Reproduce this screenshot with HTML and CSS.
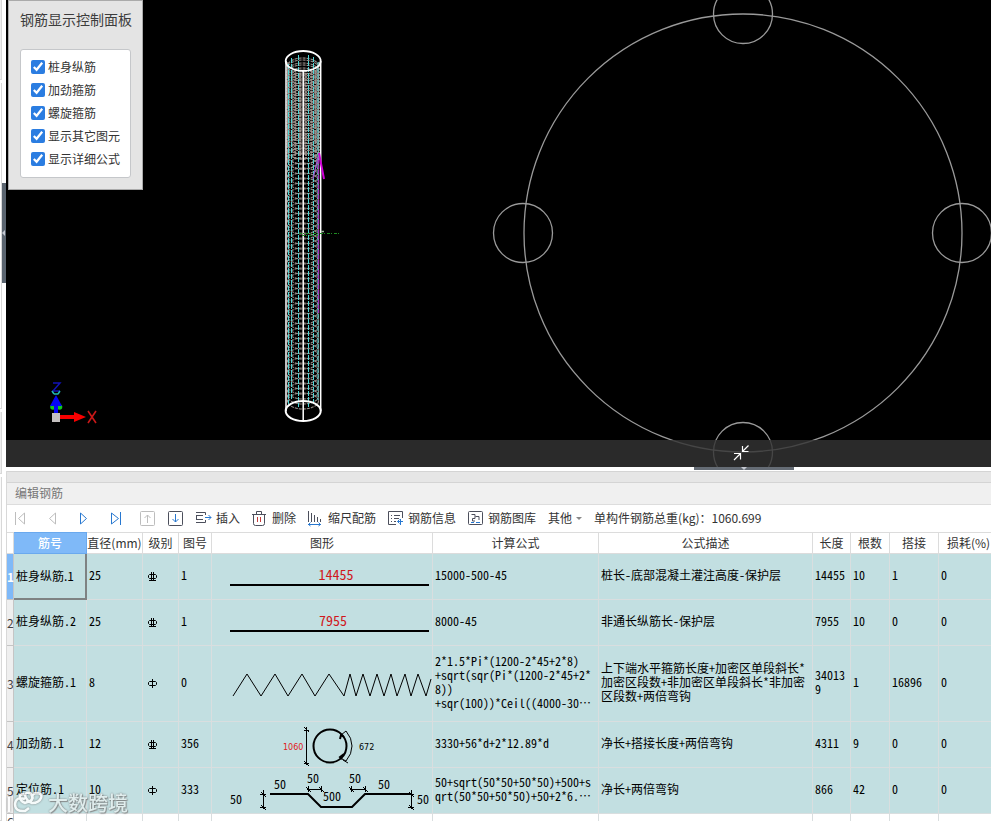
FILE: index.html
```html
<!DOCTYPE html>
<html lang="zh-CN">
<head>
<meta charset="utf-8">
<title>编辑钢筋</title>
<link rel="stylesheet" href="styles.css">
</head>
<body>
<aside class="gutter"><div class="gutter-top"></div><div class="gutter-mid"></div><div class="gutter-low"></div><div class="gutter-end"></div><button class="side-handle" aria-label="展开"></button></aside>
<main class="main">
<section class="stage">
<svg class="scene" viewBox="6 0 985 467" preserveAspectRatio="xMidYMin meet" aria-hidden="true">
<defs>
<g id="ring"><ellipse cx="303" cy="0" rx="15.5" ry="8"/></g>
<g id="rings4"><use href="#ring"/><use href="#ring" y="5"/><use href="#ring" y="10"/><use href="#ring" y="15"/></g>
<g id="rings16"><use href="#rings4"/><use href="#rings4" y="20"/><use href="#rings4" y="40"/><use href="#rings4" y="60"/></g>
</defs>
<g fill="none" stroke="#9a9a9a" stroke-width="1.3">
<circle cx="743" cy="233" r="219"/><circle cx="743" cy="14" r="29.5"/><circle cx="743" cy="452" r="29.5"/><circle cx="523" cy="233" r="29.5"/><circle cx="962" cy="233" r="29.5"/>
</g>
<g fill="none" stroke="#a09590" stroke-width="1.1" stroke-dasharray="3 1">
<use href="#rings16" y="66"/><use href="#rings16" y="146"/><use href="#rings16" y="226"/><use href="#rings16" y="306"/><use href="#rings4" y="386"/>
<use href="#rings16" y="68"/><use href="#rings4" y="146"/>
</g>
<path d="M287.500 62V160M295 70V160M300 70V160M306 70V160M311 70V160M315.500 70V160M319 62V160" stroke="#a3958f" stroke-width="2" stroke-dasharray="2 1" opacity=".8"/>
<path d="M288.500 64V404M291.500 58V400M298.500 55V407M308.500 55V407M313.500 57V402M318 62V400" stroke="#4fd6d6" stroke-width="1" stroke-dasharray="5 1" fill="none"/>
<g fill="none" stroke="#fff" stroke-width="1.5"><ellipse cx="303.200" cy="61" rx="17.500" ry="10" stroke-width="1.800"/><ellipse cx="303.200" cy="411" rx="17.500" ry="10" stroke-width="2"/><path d="M286 61V411M320.700 61V411M303.200 71V421"/></g>
<path d="M318.500 160V313" stroke="#a12fbc" stroke-width="1.400" stroke-dasharray="4 1"/>
<path d="M319 153L324 179" stroke="#d000d8" stroke-width="2"/><path d="M318 157L313 179" stroke="#9a55c8" stroke-width="1.200"/>
<path d="M299 233.500H341M302 235.500H318" stroke="#1f8a22" stroke-dasharray="3 1 1 2"/><path d="M321 231.500h3" stroke="#9db79d" stroke-width="1.500"/>
<g><circle cx="53" cy="407" r="2.800" fill="#11c71e"/><circle cx="59.500" cy="407" r="2.800" fill="#11c71e"/><path d="M56 395L62 406H58V415H54V406H50Z" fill="#0505f5"/><path d="M53 383H60L53 391H60" fill="none" stroke="#1212b4" stroke-width="1.500"/><path d="M52 391L54 394M60 391L58 394M54 394h4" stroke="#22b8b0" stroke-width="1.500"/><rect x="52" y="413" width="8" height="9" fill="#c4c0c0"/><path d="M60 415H74V412L86 417L74 422V419H60Z" fill="#f80000"/><path d="M88 411L96 423M96 411L88 423" stroke="#c91818" stroke-width="1.600"/></g>
</svg>
<div class="stage-bar"><button class="collapse" aria-label="收起"><svg width="16" height="16" viewBox="0 0 16 16" fill="none" stroke="#fff" stroke-width="1.200"><path d="M15.500 .5L9.500 6.500M9.500 1V6.500H15.500M1 15L7 9M1 8.500H7.500V14.500"/></svg></button></div>
<form class="panel">
<h2>钢筋显示控制面板</h2>
<div class="options">
<label><input type="checkbox" checked>桩身纵筋</label>
<label><input type="checkbox" checked>加劲箍筋</label>
<label><input type="checkbox" checked>螺旋箍筋</label>
<label><input type="checkbox" checked>显示其它图元</label>
<label><input type="checkbox" checked>显示详细公式</label>
</div>
</form>
</section>
<button class="drag" aria-label="调整高度"></button>
<section class="editor">
<div class="band"></div>
<h1>编辑钢筋</h1>
<div class="toolbar">
<div class="nav">
<button aria-label="首条" class="off"><svg viewBox="0 0 16 16"><path d="M3.500 2V15M12.500 3V14L6.500 8.500Z"/></svg></button>
<button aria-label="上一条" class="off"><svg viewBox="0 0 16 16"><path d="M11.500 3V14L5.500 8.500Z"/></svg></button>
<button aria-label="下一条" class="blue"><svg viewBox="0 0 16 16"><path d="M4.500 3V14L10.500 8.500Z"/></svg></button>
<button aria-label="末条" class="blue"><svg viewBox="0 0 16 16"><path d="M3.500 3V14L10.500 8.500ZM12.500 2V15"/></svg></button>
<button aria-label="上移" class="off"><svg viewBox="0 0 16 16"><rect x=".5" y="1.500" width="14" height="14" rx="1"/><path d="M7.500 13V5M4.500 8L7.500 5L10.500 8"/></svg></button>
</div>
<button aria-label="下移"><svg viewBox="0 0 16 16"><rect x=".5" y="1.500" width="14" height="14" rx="1"/><path class="accent" d="M7.500 4V12M4.500 9L7.500 12L10.500 9"/></svg></button>
<button><svg viewBox="0 0 16 16"><path d="M0 2.500H9.500V5M0 5.500H7M0 9.500H7M0 12.500H9.500V10M.5 5.500V9.500"/><path class="accent" d="M9 7.500H15M12.500 5L15 7.500L12.500 10"/></svg>插入</button>
<button><svg viewBox="0 0 16 16"><path d="M0 4.500H14M4.500 4V1.500H9.500V4M1.500 5V13.500Q1.500 15.500 3.500 15.500H10.500Q12.500 15.500 12.500 13.500V5"/><path class="red" d="M5.500 7V12M8.500 7V12"/></svg>删除</button>
<button><svg viewBox="0 0 16 16"><path d="M.5 1V12M3.500 3V12M6.500 5V12M9.500 7V12M12.500 9V12"/><path class="accent" d="M0 14.500H13M2.500 12.500L.5 14.500L2.500 16M10.500 12.500L12.500 14.500L10.500 16"/></svg>缩尺配筋</button>
<button><svg viewBox="0 0 16 16"><path d="M8 14.500H.5V1.500H14.500V8M3 5.500H4M6 5.500H12M3 8.500H4M6 8.500H11M3 11.500H4M6 11.500H8"/><path class="accent" d="M15 11.500H9.500M12.500 9V15M11.500 9.500L9.500 11.500L11.500 13.500"/></svg>钢筋信息</button>
<button><svg viewBox="0 0 16 16"><rect x=".5" y="1.500" width="14" height="13" rx="1"/><path d="M3.500 4.500H7V8.500H4.500V11H7M7.500 6.500H11V10"/><path class="accent" d="M3 12.500H6M8 12.500H12"/></svg>钢筋图库</button>
<button aria-haspopup="menu">其他<i class="caret"></i></button>
<span class="total">单构件钢筋总重(kg)：1060.699</span>
</div>
<div class="grid">
<table>
<colgroup><col class="w-no"><col class="w-name"><col class="w-dia"><col class="w-grade"><col class="w-fig"><col class="w-shape"><col class="w-formula"><col class="w-desc"><col class="w-len"><col class="w-count"><col class="w-lap"><col></colgroup>
<thead><tr><th></th><th class="current">筋号</th><th>直径(mm)</th><th>级别</th><th>图号</th><th>图形</th><th>计算公式</th><th>公式描述</th><th>长度</th><th>根数</th><th>搭接</th><th class="last">损耗(%)</th></tr></thead>
<tbody>
<tr><th class="current">1</th><td class="selected">桩身纵筋.1</td><td>25</td><td class="grade"><svg viewBox="0 0 11 12" role="img" aria-label="三级钢"><path d="M2.500 2.500H8.500L9.500 3.500V5.500L8.500 6.500H2.500L1.500 5.500V3.500ZM4.500 0V9M6.500 0V9M2 8.500H9"/></svg></td><td>1</td><td class="shape"><svg viewBox="0 0 220 45"><text class="num" x="124" y="26">14455</text><path class="bar" d="M18 31H217"/></svg></td><td>15000-500-45</td><td>桩长-底部混凝土灌注高度-保护层</td><td>14455</td><td>10</td><td>1</td><td>0</td></tr>
<tr><th>2</th><td>桩身纵筋.2</td><td>25</td><td class="grade"><svg viewBox="0 0 11 12" role="img" aria-label="三级钢"><path d="M2.500 2.500H8.500L9.500 3.500V5.500L8.500 6.500H2.500L1.500 5.500V3.500ZM4.500 0V9M6.500 0V9M2 8.500H9"/></svg></td><td>1</td><td class="shape"><svg viewBox="0 0 220 45"><text class="num" x="121" y="26">7955</text><path class="bar" d="M18 31H217"/></svg></td><td>8000-45</td><td>非通长纵筋长-保护层</td><td>7955</td><td>10</td><td>0</td><td>0</td></tr>
<tr class="tall"><th>3</th><td>螺旋箍筋.1</td><td>8</td><td class="grade"><svg viewBox="0 0 11 12" role="img" aria-label="一级钢"><path d="M2.500 2.500H8.500L9.500 3.500V5.500L8.500 6.500H2.500L1.500 5.500V3.500ZM5.500 0V9"/></svg></td><td>0</td><td class="shape"><svg viewBox="0 0 220 75"><path class="thin" d="M21 50L35 28L49 50L63 28L76 50L90 28L103 50L117 28L132 50L138 28L144 50L151 28L158 50L165 28L172 50L179 28L185 50L193 28L199 50L206 28L214 50L219 33"/></svg></td><td>2*1.5*Pi*(1200-2*45+2*8)<br>+sqrt(sqr(Pi*(1200-2*45+2*<br>8))<br>+sqr(100))*Ceil((4000-30…</td><td>上下端水平箍筋长度+加密区单段斜长*加密区段数+非加密区单段斜长*非加密区段数+两倍弯钩</td><td>340139</td><td>1</td><td>16896</td><td>0</td></tr>
<tr><th>4</th><td>加劲筋.1</td><td>12</td><td class="grade"><svg viewBox="0 0 11 12" role="img" aria-label="三级钢"><path d="M2.500 2.500H8.500L9.500 3.500V5.500L8.500 6.500H2.500L1.500 5.500V3.500ZM4.500 0V9M6.500 0V9M2 8.500H9"/></svg></td><td>356</td><td class="shape"><svg viewBox="0 0 220 45"><path class="thin" d="M94.500 5V43M92 8.500H97M92 41.500H97M92 5L97 10M92 39L97 44"/><circle class="bar" cx="118" cy="24" r="16.500"/><path class="bar" d="M132 15L129 13L128 17M132 32L128 35L130 37"/><path class="thin" d="M129 13L134 9Q140 16 140 24T134 39L128 36M131 38L136 41"/><text class="tiny red-text" x="71" y="28">1060</text><text class="tiny" x="147" y="28">672</text></svg></td><td>3330+56*d+2*12.89*d</td><td>净长+搭接长度+两倍弯钩</td><td>4311</td><td>9</td><td>0</td><td>0</td></tr>
<tr><th>5</th><td>定位筋.1</td><td>10</td><td class="grade"><svg viewBox="0 0 11 12" role="img" aria-label="一级钢"><path d="M2.500 2.500H8.500L9.500 3.500V5.500L8.500 6.500H2.500L1.500 5.500V3.500ZM5.500 0V9"/></svg></td><td>333</td><td class="shape"><svg viewBox="0 0 220 45"><path class="bar" d="M58 26H96L109 39H140L153 26H200"/><path class="thin" d="M51.500 22V41M48 26.500H54M48 39.500H54M49 24L54 29M49 37L54 42M199.500 22V41M196 26.500H202M196 39.500H202M197 24L202 29M197 37L202 42M95 21.500H110M96.500 18V24M109.500 18V24M94 19L99 24M107 19L112 24M138 21.500H154M139.500 18V24M153.500 18V24M137 19L142 24M151 19L156 24"/><g class="dim"><text x="18" y="36">50</text><text x="62" y="21">50</text><text x="95" y="15">50</text><text x="137" y="15">50</text><text x="166" y="21">50</text><text x="111" y="33">500</text><text x="205" y="36">50</text></g></svg></td><td>50+sqrt(50*50+50*50)+500+s<br>qrt(50*50+50*50)+50+2*6.…</td><td>净长+两倍弯钩</td><td>866</td><td>42</td><td>0</td><td>0</td></tr>
<tr class="blank"><th>6</th><td></td><td></td><td></td><td></td><td></td><td></td><td></td><td></td><td></td><td></td><td></td></tr>
</tbody>
</table>
</div>
</section>
</main>
<div class="watermark"><svg viewBox="0 0 36 24" width="36" height="24" fill="none" stroke="#fff" stroke-width="2.500"><path d="M2 6V21M18 8Q9 5 8 13Q8 21 18 20L22 17M17 3Q12 3 13 7T18 12L23 10Q26 9 25 5T20 2Q17 3 19 7T25 12Q32 12 34 7T29 2Q24 3 26 8"/></svg><span>大数跨境</span></div>
</body>
</html>
```
FILE: styles.css
```css
* { box-sizing: border-box; }
body {
  margin: 0;
  height: 100vh;
  display: flex;
  overflow: hidden;
  position: relative;
  background: #fff;
  color: #333;
  font: 12px/16px "Noto Sans CJK SC", sans-serif;
}
button { border: 0; padding: 0; background: none; color: inherit; font: inherit; }
.gutter { flex: 0 0 6px; position: relative; display: flex; flex-direction: column; gap: 3px; }
.gutter div { width: 2px; border: solid #d8d8d8; border-width: 0 1px 1px 0; }
.gutter-top { height: 80px; background: #eee; }
.gutter-mid { height: 326px; }
.gutter-low { height: 62px; background: #eee; }
.gutter-end { flex: 1; background: #fafafa; }
.side-handle { position: absolute; left: 2px; top: 183px; width: 4px; height: 100px; background: #5b6570; }
.side-handle::after { content: ""; position: absolute; left: 0; top: 47px; border: 3px solid transparent; border-left: 0; border-right-color: #c5c9d2; }
.main { flex: 1; min-width: 0; display: flex; flex-direction: column; }
.stage { flex: none; height: 467px; position: relative; background: #000; overflow: hidden; }
.scene { display: block; width: 100%; height: 100%; }
.stage-bar { position: absolute; inset: auto 0 0; height: 27px; background: rgba(51, 51, 51, .82); }
.collapse { position: absolute; left: calc(75% - 12px); top: 5px; height: 16px; }
.collapse svg { display: block; }
.panel { position: absolute; left: 2px; top: 0; width: 135px; height: 190px; padding: 10px 11px; border: 1px solid #aaa; background: #e4e4e4; }
.panel h2 { margin: 0 0 22px; font-size: 14px; line-height: 16px; font-weight: 400; white-space: nowrap; color: #3c3c3c; }
.options { width: 111px; height: 129px; border: 1px solid #c5c7ca; border-radius: 3px; padding: 5px 10px; background: #fff; }
.options label { display: flex; align-items: center; gap: 3px; height: 23px; white-space: nowrap; }
.options input { flex: none; width: 14px; height: 14px; margin: 0; accent-color: #2b7de1; }
.drag { position: relative; flex: none; width: 100px; height: 4px; margin-left: calc(75% - 51px); background: linear-gradient(#656c75 3px, #fff 3px); }
.drag::after { content: ""; position: absolute; left: 47px; top: 0; border: 3px solid transparent; border-bottom: 0; border-top-color: #c5c9d2; }
.editor { flex: 1; min-height: 0; display: flex; flex-direction: column; border-left: 1px solid #d8d8d8; overflow: hidden; }
.band { flex: none; height: 12px; background: #e6e6e6; border: solid #d4d4d4; border-width: 1px 0; }
h1 { margin: 0; flex: none; height: 22px; padding: 1px 8px; font-size: 12px; line-height: 18px; font-weight: 400; background: #f0f0f0; border-bottom: 1px solid #ddd; color: #777; }
.toolbar { flex: none; height: 27px; padding: 0 0 1px 5px; display: flex; align-items: center; gap: 12px; white-space: nowrap; }
.nav { display: flex; gap: 16px; }
.toolbar button { flex: none; display: flex; align-items: center; gap: 4px; }
.toolbar svg { width: 16px; height: 16px; fill: none; stroke: #4c4f5c; overflow: visible; }
.toolbar .off svg { stroke: #bdbdbd; }
.toolbar .blue svg, .toolbar .accent { stroke: #2878d0; }
.toolbar .red { stroke: #c43c3c; }
.caret { border: 3px solid transparent; border-bottom: 0; border-top-color: #888; }
.grid { flex: 1; min-height: 0; overflow: hidden; }
table { width: 100%; min-width: 994px; table-layout: fixed; border-collapse: separate; border-spacing: 0; }
.w-no { width: 7px; }
.w-name { width: 73px; }
.w-dia { width: 56px; }
.w-grade { width: 36px; }
.w-fig { width: 33px; }
.w-shape { width: 221px; }
.w-formula { width: 166px; }
.w-desc { width: 214px; }
.w-len { width: 38px; }
.w-count { width: 39px; }
.w-lap { width: 49px; }
th { padding: 0; font-weight: 400; border: solid #dcdcdc; border-width: 0 1px 1px 0; white-space: nowrap; }
thead th { height: 22px; border-top-width: 1px; }
thead .current { background: #7fb9f8; border-color: #6aa9ee; color: #fff; font-weight: 500; }
thead .last { text-align: left; padding-left: 8px; }
tbody th { background: #efefef; border-color: #c5c5c5; text-align: center; color: #444; }
tbody .current { background: #7fb9f8; color: #fff; font-weight: 700; }
td { height: 46px; padding: 0 2px 3px; border: solid #d9dedf; border-width: 0 1px 1px 0; background: #c2dfe1; color: #000; line-height: 14px; font-feature-settings: "hwid"; word-break: break-all; vertical-align: middle; }
.tall td { height: 76px; }
.blank td { background: #fff; height: 46px; }
.blank th { height: 46px; background: #fff; vertical-align: top; line-height: 16px; }
.selected { padding-bottom: 0; border: solid #7e8283; border-width: 0 2px 2px 0; font-feature-settings: normal; }
.grade { padding: 3px 0 0 4px; }
.grade svg { display: block; width: 11px; height: 12px; fill: none; stroke: #000; }
.shape { padding: 0; }
.shape svg { display: block; width: 220px; margin: 0 auto; overflow: visible; }
.bar { fill: none; stroke: #000; stroke-width: 2; }
.thin { fill: none; stroke: #000; stroke-width: 1; }
.num { font-size: 14px; text-anchor: middle; fill: #d0181c; }
.red-text { fill: #e02020; }
.tiny { font: 8px "DejaVu Sans", sans-serif; }
.dim { font-size: 12px; }
.watermark { position: absolute; left: 7px; bottom: 6px; display: flex; align-items: center; gap: 5px; color: #e6f0f0; font-size: 20px; line-height: 24px; font-weight: 500; opacity: .85; text-shadow: 0 0 2px #666, 1px 1px 1px #888; pointer-events: none; }
.watermark svg { filter: drop-shadow(0 0 1px #777); }
```
